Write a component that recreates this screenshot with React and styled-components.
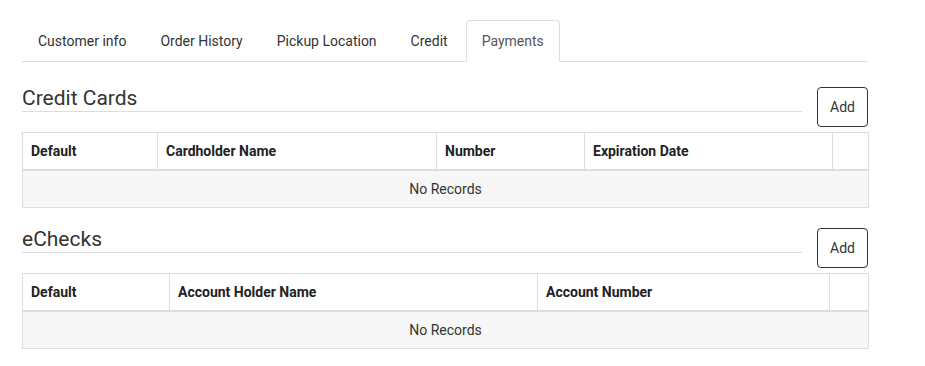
import styled, { createGlobalStyle } from "styled-components";

const GlobalStyle = createGlobalStyle`
  body {
    margin: 0;
    background: #fff;
    font-family: Roboto, "Liberation Sans", Arial, sans-serif;
    color: #333;
  }
`;

const TABS = ["Customer info", "Order History", "Pickup Location", "Credit", "Payments"];

const SECTIONS = [
  {
    title: "Credit Cards",
    columns: [
      { label: "Default", width: 135 },
      { label: "Cardholder Name", width: 279 },
      { label: "Number", width: 148 },
      { label: "Expiration Date", width: 248 },
      { label: "", width: 36 },
    ],
  },
  {
    title: "eChecks",
    columns: [
      { label: "Default", width: 147 },
      { label: "Account Holder Name", width: 368 },
      { label: "Account Number", width: 292 },
      { label: "", width: 39 },
    ],
  },
];

const App = () => {
  return (
    <Page>
      <GlobalStyle />
      <TabBar>
        {TABS.map((tab) => (
          <Tab key={tab} active={tab === "Payments"}>
            {tab}
          </Tab>
        ))}
      </TabBar>
      {SECTIONS.map((section, index) => (
        <Section key={section.title} first={index === 0}>
          <SectionHead>
            <SectionTitle>{section.title}</SectionTitle>
            <AddButton>Add</AddButton>
          </SectionHead>
          <Table>
            <colgroup>
              {section.columns.map((col, i) => (
                <col key={i} style={{ width: col.width }} />
              ))}
            </colgroup>
            <thead>
              <tr>
                {section.columns.map((col, i) => (
                  <HeadCell key={i}>{col.label}</HeadCell>
                ))}
              </tr>
            </thead>
            <tbody>
              <tr>
                <EmptyCell colSpan={section.columns.length}>No Records</EmptyCell>
              </tr>
            </tbody>
          </Table>
        </Section>
      ))}
    </Page>
  );
};

const Page = styled.div`
  width: 846px;
  padding: 20px 0 0 22px;
`;

const TabBar = styled.ul`
  display: flex;
  align-items: flex-end;
  margin: 0;
  padding: 0;
  list-style: none;
  border-bottom: 1px solid #dddddd;
`;

const Tab = styled.li`
  margin: 0 2px ${(props) => (props.active ? "-1px" : "0")} 0;
  padding: ${(props) => (props.active ? "10px 15px" : "10px 16px")};
  font-size: 14px;
  line-height: 20px;
  color: ${(props) => (props.active ? "#555" : "#333")};
  background: #fff;
  border: ${(props) => (props.active ? "1px solid #dddddd" : "none")};
  border-bottom-color: #fff;
  border-radius: 4px 4px 0 0;
  cursor: pointer;
`;

const Section = styled.section`
  margin-top: ${(props) => (props.first ? "24px" : "19px")};
`;

const SectionHead = styled.div`
  display: flex;
  align-items: flex-start;
`;

const SectionTitle = styled.h2`
  flex: 1;
  margin: 0 15px 0 0;
  font-size: 21px;
  font-weight: 400;
  line-height: 25px;
  color: #333;
  border-bottom: 1px solid #dddddd;
`;

const AddButton = styled.button`
  width: 51px;
  height: 40px;
  margin-top: 1px;
  padding: 0;
  font-family: inherit;
  font-size: 14px;
  color: #333;
  background: #fff;
  border: 1px solid #333;
  border-radius: 4px;
  cursor: pointer;
`;

const Table = styled.table`
  width: 100%;
  margin-top: 5px;
  table-layout: fixed;
  border-collapse: collapse;
  font-size: 14px;
  line-height: 20px;
`;

const HeadCell = styled.th`
  padding: 8px;
  text-align: left;
  font-weight: 700;
  color: #222;
  border: 1px solid #dddddd;
  border-bottom-width: 2px;
`;

const EmptyCell = styled.td`
  padding: 8px;
  text-align: center;
  color: #333;
  background: #f7f7f7;
  border: 1px solid #dddddd;
`;

export default App;
